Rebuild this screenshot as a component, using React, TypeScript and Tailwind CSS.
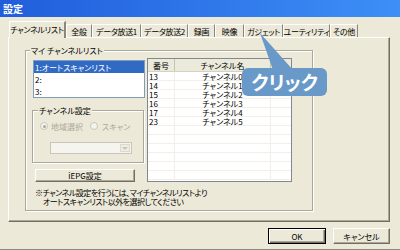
const jp = "font-['Noto_Sans_CJK_JP',sans-serif] [font-feature-settings:'palt']";

const tabs = [
  { label: "全般", w: 26 },
  { label: "データ放送1", w: 49 },
  { label: "データ放送2", w: 47 },
  { label: "録画", w: 27 },
  { label: "映像", w: 29 },
  { label: "ガジェット", w: 39 },
  { label: "ユーティリティ", w: 47 },
  { label: "その他", w: 28 },
];

const rows = [
  ["13", "チャンネル0"],
  ["14", "チャンネル1"],
  ["15", "チャンネル2"],
  ["16", "チャンネル3"],
  ["17", "チャンネル4"],
  ["23", "チャンネル5"],
  ["", ""],
  ["", ""],
  ["", ""],
  ["", ""],
  ["", ""],
  ["", ""],
];

const Radio = ({ checked }: { checked?: boolean }) => (
  <span className="w-[8px] h-[8px] rounded-full border border-[#c9c7ba] bg-[#f4f3ee] flex items-center justify-center">
    {checked && <span className="w-[3px] h-[3px] rounded-full bg-[#aca899]" />}
  </span>
);

const App = () => {
  return (
    <div className={`${jp} w-[400px] h-[250px] relative overflow-hidden flex flex-col bg-[#ece9d8] border-b border-[#8e8c80] text-[8px] leading-[9px] text-black`}>
      {/* title bar */}
      <div className="h-[17px] shrink-0 bg-gradient-to-r from-[#215ddb] to-[#3e8ff7] flex items-center px-[3px]">
        <span className="text-white font-bold text-[10px] leading-[12px]">設定</span>
      </div>

      <div className="flex flex-col pl-[8px] pt-[4px]">
        {/* tabs */}
        <div className="flex items-end h-[16px] whitespace-nowrap tracking-[-0.3px]">
          <div className="ml-[1px] w-[57px] h-[17px] -mb-[1px] relative z-10 bg-[#ece9d8] border-t border-l border-white border-r-2 border-r-[#8a887c] flex items-center justify-center pb-[2px]">
            チャンネルリスト
          </div>
          {tabs.map((t) => (
            <div
              key={t.label}
              style={{ width: t.w }}
              className="h-[13px] border-t border-l border-white border-r border-r-[#8a887c] flex items-center justify-center"
            >
              {t.label}
            </div>
          ))}
        </div>

        {/* panel */}
        <div className="w-[382px] h-[185px] border-t border-l border-white border-r border-b border-r-[#716f64] border-b-[#716f64] shadow-[inset_-1px_-1px_0_#aca899] pl-[16px] pt-[12px]">
          <div className="relative w-[288px] h-[161px] border border-[#aca899] shadow-[1px_1px_0_#fff,inset_1px_1px_0_#fff] pl-[7px] pt-[7px]">
            <span className="absolute -top-[5px] left-[4px] px-[1px] bg-[#ece9d8] whitespace-nowrap">マイ チャンネルリスト</span>

            <div className="flex items-start">
              <div className="w-[112px] pt-[2px] flex flex-col">
                <div className="h-[38px] border border-[#7f9db9] bg-white flex flex-col">
                  <div className="h-[12px] bg-[#316ac5] text-white flex items-center pl-[1px]">1:オートスキャンリスト</div>
                  <div className="h-[12px] flex items-center pl-[1px]">2:</div>
                  <div className="h-[12px] flex items-center pl-[1px]">3:</div>
                </div>

                <div className="relative mt-[12px] -ml-[1px] w-[112px] h-[53px] border border-[#aca899] shadow-[1px_1px_0_#fff,inset_1px_1px_0_#fff] pt-[10px]">
                  <span className="absolute -top-[5px] left-[5px] px-[1px] bg-[#ece9d8]">チャンネル設定</span>
                  <div className="flex items-center h-[10px] pl-[7px] text-[#aca899]">
                    <Radio checked />
                    <span className="ml-[3px]">地域選択</span>
                    <span className="ml-[7px]">
                      <Radio />
                    </span>
                    <span className="ml-[4px]">スキャン</span>
                  </div>
                  <div className="mt-[11px] ml-[17px] w-[82px] h-[12px] border border-[#c9c7ba] bg-[#f5f4ee] flex justify-end p-[1px]">
                    <div className="w-[10px] h-full bg-[#eeede5] border border-[#dcdacd] flex items-center justify-center">
                      <span className="w-0 h-0 border-l-[3px] border-r-[3px] border-t-[3px] border-l-transparent border-r-transparent border-t-[#c9c7ba]" />
                    </div>
                  </div>
                </div>

                <div className="mt-[6px] ml-[2px] w-[100px] h-[13px] border border-t-white border-l-white border-r-[#716f64] border-b-[#716f64] shadow-[inset_-1px_-1px_0_#aca899] flex items-center justify-center">
                  iEPG設定
                </div>
              </div>

              {/* list view */}
              <div className="ml-[2px] w-[145px] h-[124px] border border-[#828790] bg-white flex flex-col overflow-hidden">
                <div className="h-[13px] shrink-0 flex bg-[#ebeadb] border-b border-[#d6d2c2]">
                  <div className="w-[27px] border-r border-[#c7c5b2] flex items-center justify-center">番号</div>
                  <div className="w-[96px] border-r border-[#c7c5b2] flex items-center justify-center">チャンネル名</div>
                  <div className="flex-1" />
                </div>
                {rows.map((r, i) => (
                  <div key={i} className="h-[9px] shrink-0 flex border-b border-[#f1efe6]">
                    <div className="w-[27px] border-r border-[#f1efe6] pl-[1px] flex items-center">{r[0]}</div>
                    <div className="w-[96px] border-r border-[#f1efe6] flex items-center justify-center">{r[1]}</div>
                    <div className="flex-1" />
                  </div>
                ))}
              </div>
            </div>

            <div className="mt-[6px] ml-[2px] flex flex-col whitespace-nowrap tracking-[-0.5px]">
              <span>※チャンネル設定を行うには、マイチャンネルリストより</span>
              <span className="pl-[8px]">オートスキャンリスト以外を選択してください</span>
            </div>
          </div>
        </div>

        {/* dialog buttons */}
        <div className="flex justify-end gap-[7px] mt-[6px] w-[382px]">
          <div className="w-[58px] h-[16px] border border-black shadow-[inset_1px_1px_0_#fff,inset_-1px_-1px_0_#716f64,inset_-2px_-2px_0_#aca899] flex items-center justify-center">
            OK
          </div>
          <div className="w-[57px] h-[16px] border border-t-white border-l-white border-r-[#716f64] border-b-[#716f64] shadow-[inset_-1px_-1px_0_#aca899] flex items-center justify-center">
            キャンセル
          </div>
        </div>
      </div>

      {/* callout */}
      <svg className="absolute left-0 top-0 pointer-events-none" width="400" height="250">
        <polygon points="260,33 273,70 293,70" fill="#6899c8" />
      </svg>
      <div className="absolute left-[242px] top-[68px] w-[85px] h-[28px] rounded-[6px] bg-[#6899c8] flex items-center justify-center">
        <span className="text-white font-bold text-[19px] leading-[20px]">クリック</span>
      </div>
    </div>
  );
};

export default App;
